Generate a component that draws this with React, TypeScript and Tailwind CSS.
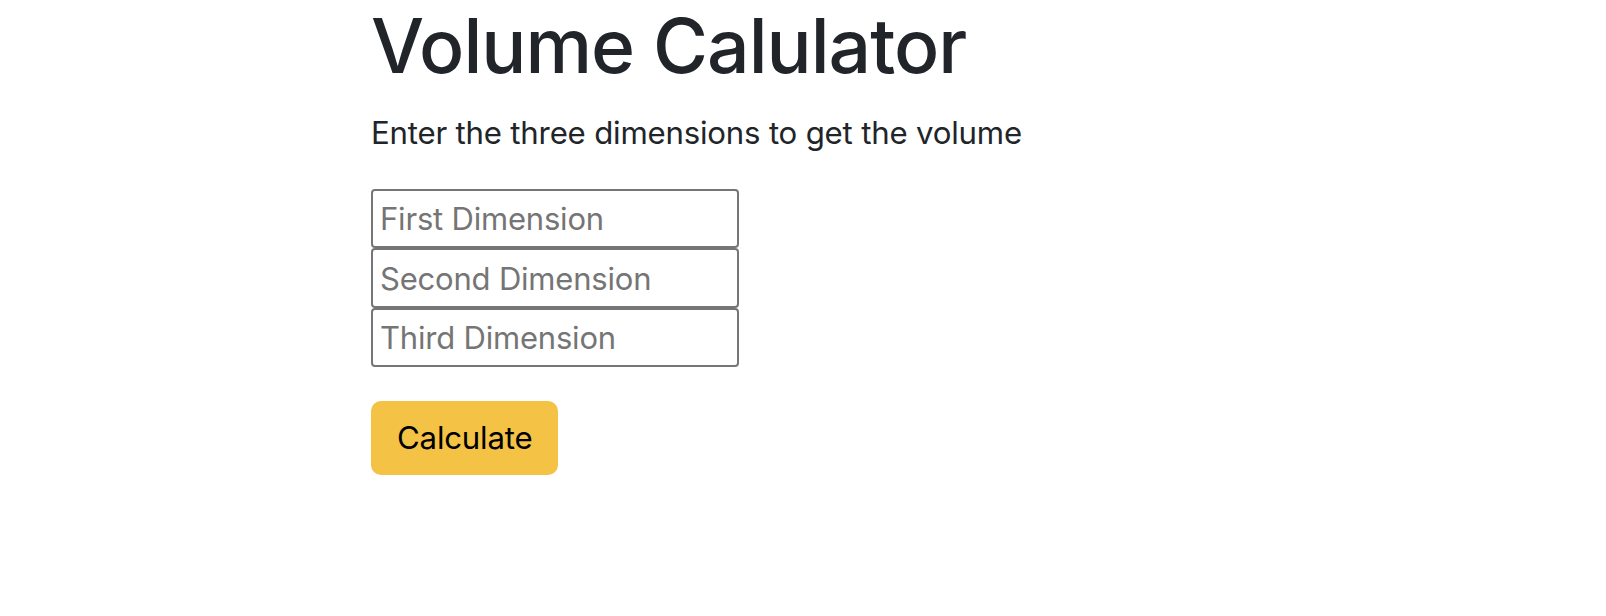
import React from "react";

export default function App() {
  const font = { fontFamily: 'Inter, "Liberation Sans", Arial, sans-serif' };
  return (
    <div className="min-h-[616px] w-full bg-white" style={font}>
      <div className="ml-[371px] flex flex-col items-start">
        <h1 className="m-0 pt-[1px] text-[75px] leading-[1.2] font-medium text-[#212529] tracking-[-1px]">
          Volume Calulator
        </h1>
        <p className="mt-[19px] mb-[32px] text-[31.2px] leading-[1.5] text-[#212529] tracking-[-0.2px]">
          Enter the three dimensions to get the volume
        </p>
        <div className="flex flex-col">
          {["First Dimension", "Second Dimension", "Third Dimension"].map((ph) => (
            <input
              key={ph}
              type="text"
              placeholder={ph}
              className="box-border h-[59.5px] w-[368px] rounded-[4px] border-2 border-[#767676] bg-white px-[7px] text-[31px] tracking-[-0.2px] text-black outline-none placeholder:text-[#757575]"
              style={font}
            />
          ))}
        </div>
        <button
          type="button"
          className="mt-[34px] h-[74px] rounded-[10px] border-2 border-[#f4c244] bg-[#f4c244] px-[24px] text-[31.2px] leading-[1.5] text-black tracking-[-0.2px]"
          style={font}
        >
          Calculate
        </button>
      </div>
    </div>
  );
}
